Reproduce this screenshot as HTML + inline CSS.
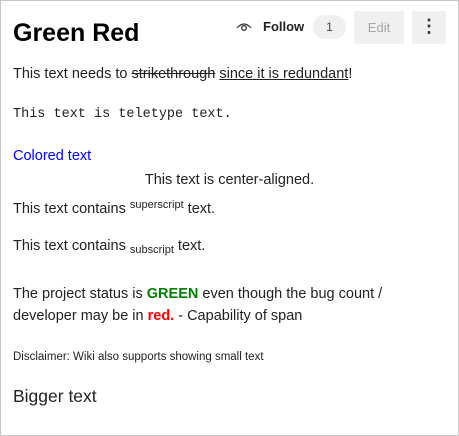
<!DOCTYPE html>
<html><head><style>
html,body{margin:0;padding:0;background:#fff;}
body{width:459px;height:436px;position:relative;overflow:hidden;font-family:"Liberation Sans",sans-serif;color:#222;}
.frame{position:absolute;left:0;top:0;width:457px;height:434px;border:1px solid #c8c8c8;}
.a{position:absolute;left:13px;white-space:nowrap;font-size:14.5px;line-height:20px;}
h1{position:absolute;left:13px;top:16px;margin:0;font-size:25px;font-weight:bold;color:#000;line-height:34px;}
.btn{position:absolute;background:#f0f0f0;border-radius:2px;}
</style></head><body>
<div class="frame"></div>
<h1>Green Red</h1>
<svg style="position:absolute;left:235px;top:20px" width="18" height="14" viewBox="0 0 18 14"><path d="M2 8 Q9 0 16 8" fill="none" stroke="#333" stroke-width="1.3"/><circle cx="9" cy="8" r="2.3" fill="none" stroke="#333" stroke-width="1.3"/></svg>
<div style="position:absolute;left:263px;top:19px;font-size:13px;font-weight:bold;color:#222">Follow</div>
<div style="position:absolute;left:313px;top:15px;width:33px;height:24px;border-radius:12px;background:#f0f0f0;font-size:12px;color:#444;text-align:center;line-height:24px">1</div>
<div class="btn" style="left:354px;top:11px;width:50px;height:33px;color:#a6a6a6;font-size:13px;text-align:center;line-height:33px">Edit</div>
<div class="btn" style="left:412px;top:11px;width:34px;height:33px;color:#333;font-size:18px;text-align:center;line-height:31px;font-weight:bold">&#8942;</div>
<div class="a" style="top:64px">This text needs to <s>strikethrough</s> <u>since it is redundant</u>!</div>
<div class="a" style="top:105px;font-family:'Liberation Mono',monospace;font-size:13.5px">This text is teletype text.</div>
<div class="a" style="top:146px;color:#0000ff">Colored text</div>
<div class="a" style="top:170px;left:0;width:459px;text-align:center">This text is center-aligned.</div>
<div class="a" style="top:195px">This text contains <sup style="font-size:11px;vertical-align:5px">superscript</sup> text.</div>
<div class="a" style="top:236px">This text contains <sub style="font-size:11px;vertical-align:-3px">subscript</sub> text.</div>
<div class="a" style="top:284px">The project status is <b style="color:#008000">GREEN</b> even though the bug count /</div>
<div class="a" style="top:306px">developer may be in <b style="color:#ff0000">red.</b> - Capability of span</div>
<div class="a" style="top:347px;font-size:11.5px">Disclaimer: Wiki also supports showing small text</div>
<div class="a" style="top:384px;font-size:17.5px;line-height:24px">Bigger text</div>
</body></html>
